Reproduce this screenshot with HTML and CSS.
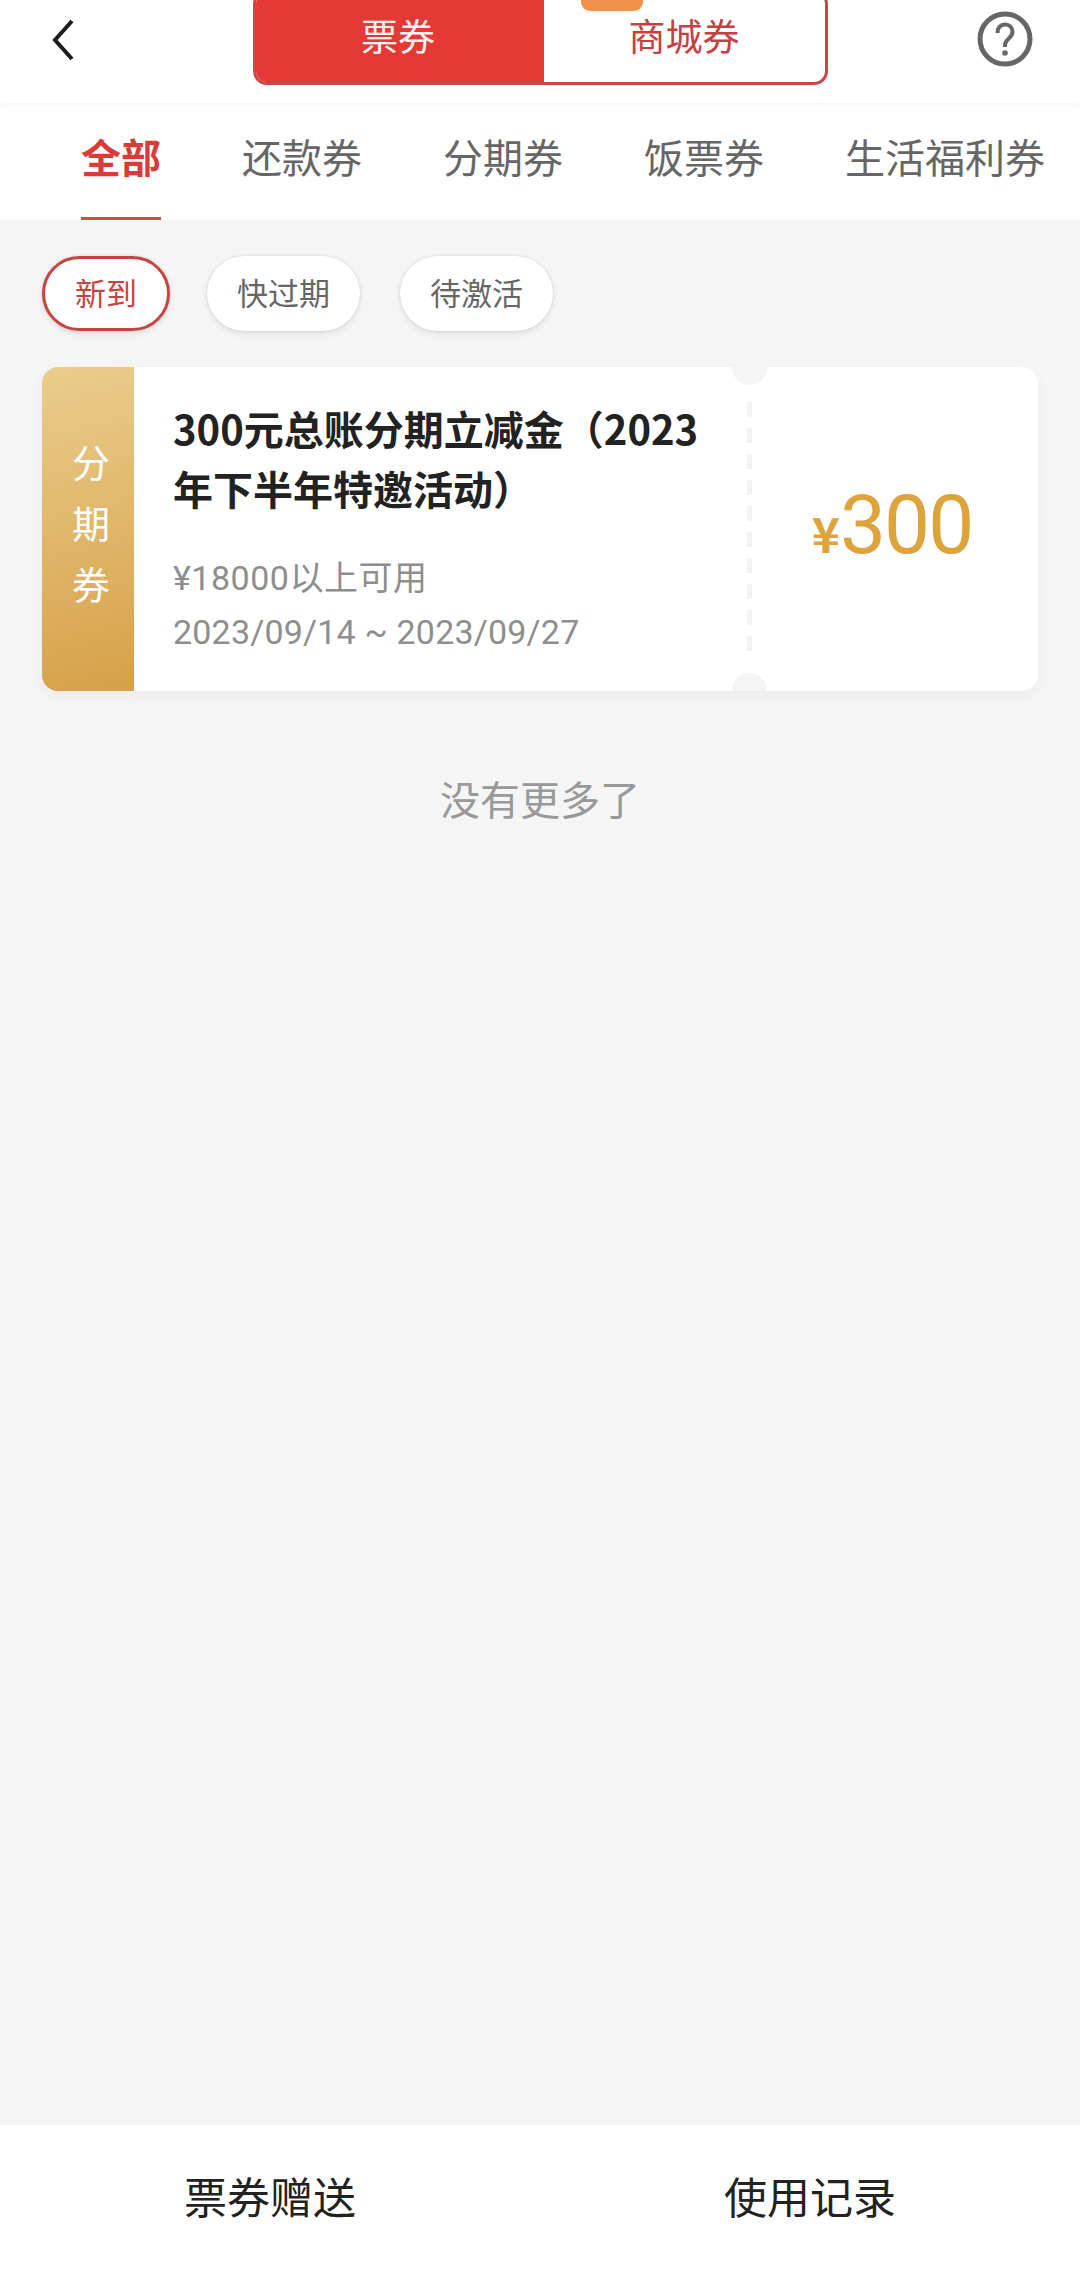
FILE: index.html
```html
<!DOCTYPE html>
<html lang="zh-CN">
<head>
    <meta charset="UTF-8">
    <meta name="viewport" content="width=device-width, initial-scale=1.0">
    <title>票券</title>
    <link rel="stylesheet" href="styles.css">
</head>
<body>
    <div class="page">
        <header class="topbar">
            <div class="topbar-left">
                <svg class="icon-back" viewBox="0 0 24 42" width="24" height="42">
                    <path d="M21 2 L4 21 L21 40" fill="none" stroke="#1c1c1c" stroke-width="4"/>
                </svg>
            </div>
            <div class="segment">
                <div class="segment-item segment-on">票券</div>
                <div class="segment-item">
                    <span class="segment-badge"></span>
                    商城券
                </div>
            </div>
            <div class="topbar-right">
                <svg class="icon-help" viewBox="0 0 56 56" width="56" height="56">
                    <circle cx="28" cy="28" r="25" fill="none" stroke="#666" stroke-width="5"/>
                    <path d="M20.5 22 C20.5 16.5 23.5 13.5 28 13.5 C32.5 13.5 35.5 16.5 35.5 21 C35.5 27 28.5 28 28 33.5 L28 36" fill="none" stroke="#666" stroke-width="4"/>
                    <circle cx="28" cy="42" r="2.8" fill="#666"/>
                </svg>
            </div>
        </header>

        <nav class="tabs">
            <div class="tab tab-on">全部</div>
            <div class="tab">还款券</div>
            <div class="tab">分期券</div>
            <div class="tab">饭票券</div>
            <div class="tab">生活福利券</div>
        </nav>

        <main class="content">
            <div class="chips">
                <div class="chip chip-on">新到</div>
                <div class="chip">快过期</div>
                <div class="chip">待激活</div>
            </div>

            <div class="coupon">
                <div class="coupon-type">
                    <span>分</span>
                    <span>期</span>
                    <span>券</span>
                </div>
                <div class="coupon-body">
                    <div class="coupon-title">300元总账分期立减金（2023年下半年特邀活动）</div>
                    <div class="coupon-meta">
                        <div class="coupon-limit">¥18000以上可用</div>
                        <div class="coupon-date">2023/09/14 ~ 2023/09/27</div>
                    </div>
                </div>
                <div class="coupon-divider">
                    <span class="notch notch-top"></span>
                    <span class="notch notch-bottom"></span>
                </div>
                <div class="coupon-amount">
                    <span class="amount-sign">¥</span><span class="amount-num">300</span>
                </div>
            </div>

            <div class="no-more">没有更多了</div>
        </main>

        <footer class="bottombar">
            <div class="bottom-item">票券赠送</div>
            <div class="bottom-item">使用记录</div>
        </footer>
    </div>
</body>
</html>
```

FILE: styles.css
```css
*{
    box-sizing: border-box;
}

body{
    margin: 0;
    background-color: #f5f5f5;
    font-family: "Roboto", "Noto Sans CJK SC", sans-serif;
}

.page{
    display: flex;
    flex-direction: column;
    height: 2269px;
    overflow: hidden;
}

/* top bar */
.topbar{
    display: grid;
    grid-template-columns: 1fr 575px 1fr;
    height: 103px;
    background-color: #fff;
    box-shadow: 0 1px 6px rgba(0, 0, 0, 0.05);
    overflow: hidden;
    position: relative;
    z-index: 1;
}

.topbar-left{
    padding: 19px 0 0 51px;
}

.topbar-right{
    display: flex;
    justify-content: flex-end;
    padding: 11px 47px 0 0;
}

.icon-back,
.icon-help{
    display: block;
}

.segment{
    display: flex;
    height: 95px;
    margin-top: -10px;
    border: 3px solid #cb4646;
    border-radius: 14px;
    overflow: hidden;
    background-color: #fff;
}

.segment-item{
    flex: 1;
    display: flex;
    align-items: center;
    justify-content: center;
    position: relative;
    padding-bottom: 5px;
    font-size: 37px;
    color: #c73f3f;
}

.segment-on{
    flex: 0 0 291px;
    margin: -3px 0 -3px -3px;
    background-color: #e53935;
    color: #fdf3f2;
}

.segment-badge{
    position: absolute;
    top: 0;
    left: 37px;
    width: 62px;
    height: 18px;
    border-radius: 0 0 9px 9px;
    background-color: #f29248;
}

/* tabs */
.tabs{
    display: flex;
    gap: 81px;
    height: 117px;
    padding-left: 81px;
    background-color: #fff;
    white-space: nowrap;
}

.tab{
    height: 117px;
    padding-top: 27px;
    font-size: 40px;
    line-height: 60px;
    color: #666;
}

.tab-on{
    font-weight: 700;
    color: #d73c38;
    border-bottom: 3px solid #c9504d;
}

/* list */
.content{
    flex: 1;
    padding: 36px 42px 0;
}

.chips{
    display: flex;
    gap: 37px;
}

.chips .chip + .chip + .chip{
    margin-left: 3px;
}

.chip{
    display: flex;
    align-items: center;
    justify-content: center;
    height: 75px;
    width: 153px;
    padding-bottom: 4px;
    border-radius: 38px;
    background-color: #fff;
    box-shadow: 0 0 3px rgba(0, 0, 0, 0.12), 0 3px 7px rgba(0, 0, 0, 0.08);
    font-size: 31px;
    color: #666;
}

.chip-on{
    width: 128px;
    border: 3px solid #c9443f;
    color: #c9443f;
}

.coupon{
    display: flex;
    height: 324px;
    margin-top: 36px;
    border-radius: 16px;
    background-color: #fff;
    box-shadow: 0 6px 16px rgba(0, 0, 0, 0.04);
    overflow: hidden;
}

.coupon-type{
    flex: 0 0 92px;
    display: flex;
    flex-direction: column;
    align-items: center;
    justify-content: center;
    padding: 0 0 7px 6px;
    background: linear-gradient(165deg, #ebcd8d, #d6a048);
    color: #fff;
    font-size: 38px;
    line-height: 61px;
}

.coupon-body{
    width: 615px;
    padding: 31px 30px 0 39px;
}

.coupon-title{
    font-family: "Noto Sans CJK SC", sans-serif;
    font-size: 40px;
    font-weight: 700;
    line-height: 60px;
    color: #222;
}

.coupon-meta{
    margin-top: 33px;
    font-size: 34px;
    line-height: 54px;
    color: #8e8e8e;
}

.coupon-limit{
    letter-spacing: 0.5px;
}

.coupon-date{
    letter-spacing: 0.2px;
}

.coupon-divider{
    flex: 0 0 5px;
    margin: 35px 0 38px -2px;
    position: relative;
    background: repeating-linear-gradient(to bottom, #f3f3f3 0, #f3f3f3 15px, transparent 15px, transparent 26px);
}

.notch{
    position: absolute;
    left: -15px;
    width: 35px;
    height: 35px;
    border-radius: 50%;
    background-color: #f5f5f5;
}

.notch-top{
    top: -52px;
}

.notch-bottom{
    bottom: -55px;
}

.coupon-amount{
    flex: 1;
    display: flex;
    align-items: baseline;
    justify-content: center;
    padding: 108px 6px 0 0;
    color: #dfa33c;
}

.amount-sign{
    font-size: 48px;
    font-weight: 700;
    font-family: "Noto Sans CJK SC", sans-serif;
}

.amount-num{
    font-size: 82px;
    font-weight: 400;
    line-height: 100px;
    letter-spacing: -2px;
}

.no-more{
    margin-top: 81px;
    text-align: center;
    font-size: 40px;
    line-height: 60px;
    color: #999;
}

/* bottom bar */
.bottombar{
    display: grid;
    grid-template-columns: 1fr 1fr;
    height: 144px;
    background-color: #fff;
}

.bottom-item{
    display: flex;
    align-items: center;
    justify-content: center;
    padding-bottom: 5px;
    font-size: 43px;
    color: #222;
}
```
